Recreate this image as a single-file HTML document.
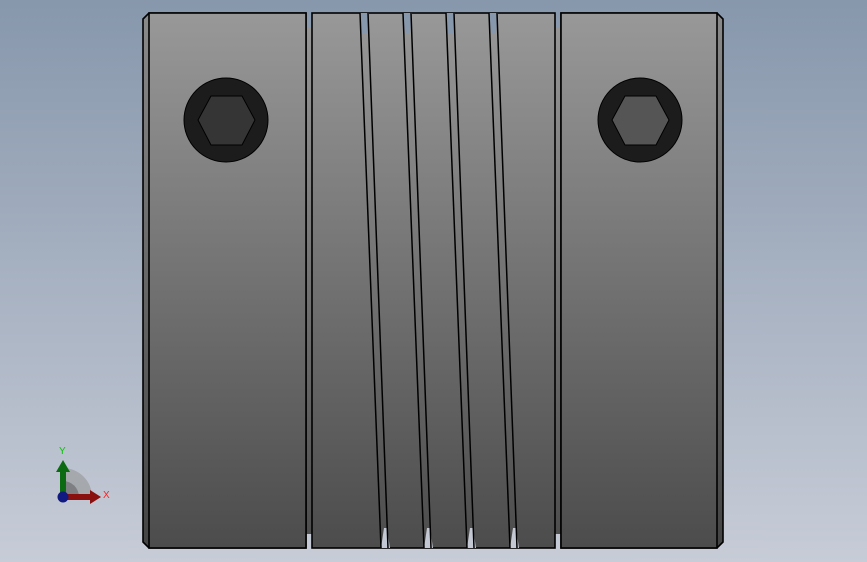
<!DOCTYPE html>
<html><head><meta charset="utf-8"><style>
html,body{margin:0;padding:0;width:867px;height:562px;overflow:hidden}
</style></head><body>
<svg width="867" height="562" viewBox="0 0 867 562" xmlns="http://www.w3.org/2000/svg">
<defs>
<linearGradient id="bg" x1="0" y1="0" x2="0" y2="1">
<stop offset="0" stop-color="#8797ac"/><stop offset="1" stop-color="#c7ccd7"/>
</linearGradient>
<linearGradient id="m" x1="0" y1="0" x2="0" y2="562" gradientUnits="userSpaceOnUse">
<stop offset="0" stop-color="#9a9a9a"/><stop offset="1" stop-color="#4a4a4a"/>
</linearGradient>
<linearGradient id="e" x1="0" y1="0" x2="0" y2="1">
<stop offset="0" stop-color="#8a8a8a"/><stop offset="1" stop-color="#444"/>
</linearGradient>
</defs>
<rect width="867" height="562" fill="url(#bg)"/>
<!-- gap fills -->
<rect x="305" y="27" width="8" height="507" fill="url(#m)"/>
<rect x="554" y="27" width="8" height="507" fill="url(#m)"/>
<g stroke="#000" stroke-width="1.6">
<polygon points="143,19 149,13 306,13 306,548 149,548 143,542" fill="url(#e)"/>
<rect x="149" y="13" width="157" height="535" fill="url(#m)"/>
<rect x="312" y="13" width="243" height="535" fill="url(#m)"/>
<polygon points="561,13 717,13 723,19 723,542 717,548 561,548" fill="url(#e)"/>
<rect x="561" y="13" width="156" height="535" fill="url(#m)"/>
</g>
<g fill="#8797ac">
<polygon points="360,13 369,13 367,33 362,33"/>
<polygon points="403,13 412,13 410,33 405,33"/>
<polygon points="446,13 455,13 453,33 448,33"/>
<polygon points="489,13 498,13 496,33 491,33"/>
</g>
<g fill="#c3c8d3">
<polygon points="381,548 390,548 387,528 384,528"/>
<polygon points="424,548 433,548 430,528 427,528"/>
<polygon points="467,548 476,548 473,528 470,528"/>
<polygon points="510,548 519,548 516,528 513,528"/>
</g>
<g stroke="#000" stroke-width="1.5" fill="none">
<path d="M360,13 Q369,250 381,548"/><path d="M368,13 Q376,250 388,548"/>
<path d="M403,13 Q412,250 424,548"/><path d="M411,13 Q419,250 431,548"/>
<path d="M446,13 Q455,250 467,548"/><path d="M454,13 Q462,250 474,548"/>
<path d="M489,13 Q498,250 510,548"/><path d="M497,13 Q505,250 517,548"/>
</g>
<g stroke="#000" stroke-width="1">
<circle cx="226" cy="120" r="42" fill="#1c1c1c"/>
<polygon points="198,120 211,96 242,96 255,120 242,145 211,145" fill="#353535"/>
<circle cx="640" cy="120" r="42" fill="#1c1c1c"/>
<polygon points="612,120 625,96 656,96 669,120 656,145 625,145" fill="#555"/>
</g>
<path d="M63,497 L63,468 A29,29 0 0 1 92,497 Z" fill="#a5a8ad"/>
<path d="M63,497 L63,481 A16,16 0 0 1 79,497 Z" fill="#7d7f83"/>
<rect x="60" y="470" width="6" height="27" fill="#0c6b12"/>
<polygon points="56,472 63,460 70,472" fill="#0c6b12"/>
<rect x="63" y="494" width="28" height="6" fill="#8a0f0f"/>
<polygon points="90,490 101,497 90,504" fill="#8a0f0f"/>
<circle cx="63" cy="497" r="5.5" fill="#101a80"/>
<text x="59" y="454" font-family="Liberation Sans, sans-serif" font-size="10" fill="#10c010">Y</text>
<text x="103" y="498" font-family="Liberation Sans, sans-serif" font-size="10" fill="#ff2020">X</text>
</svg>
</body></html>
